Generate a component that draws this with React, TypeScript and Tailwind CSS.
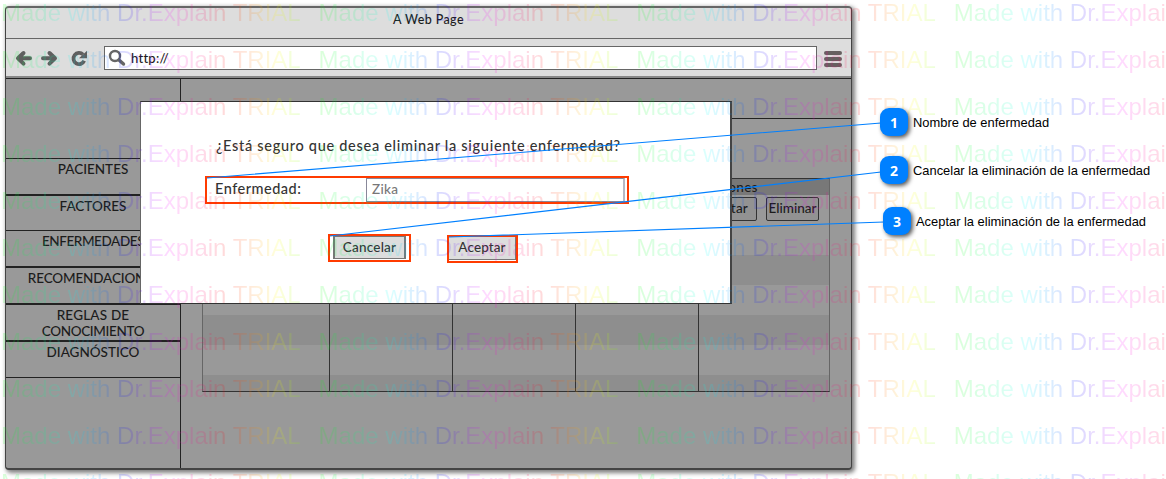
import React from "react";

function MenuItem({ children, className }: { children: React.ReactNode; className: string }) {
  return (
    <div className={`w-full shrink-0 whitespace-nowrap border-[#222] text-center text-[13.5px] leading-4 text-[#1c1c1c] ${className}`}>
      {children}
    </div>
  );
}

function Sidebar() {
  return (
    <nav className="flex w-[175px] shrink-0 flex-col border-r border-[#222]">
      <div className="h-[79px] shrink-0" />
      <MenuItem className="h-[36px] border-t pt-[2px]">PACIENTES</MenuItem>
      <MenuItem className="h-[36px] border-t-2 pt-[2px]">FACTORES</MenuItem>
      <MenuItem className="h-[36px] border-t pt-[2px] tracking-[-0.4px]">ENFERMEDADES</MenuItem>
      <MenuItem className="h-[37px] border-t-2 pt-[2px] pl-[2px] tracking-[-0.15px]">RECOMENDACIONES</MenuItem>
      <MenuItem className="h-[37px] border-t-2 pt-[2px]">
        <span className="tracking-[0.2px]">REGLAS DE</span>
        <br />
        <span className="tracking-[-0.35px]">CONOCIMIENTO</span>
      </MenuItem>
      <MenuItem className="h-[38px] border-y border-t-2 pt-[2px]">DIAGNÓSTICO</MenuItem>
    </nav>
  );
}

function ActionButton({ children, className }: { children: React.ReactNode; className: string }) {
  return (
    <div className={`flex h-6 items-center rounded-[2px] border border-[#333] bg-[#929292] pb-px text-[13.5px] text-[#1c1c1c] ${className}`}>
      {children}
    </div>
  );
}

function ResultsTable() {
  return (
    <div className="mt-[59px] ml-[21px] flex h-[214px] w-[628px] flex-col border border-[#333] border-x-[#666]">
      <div className="flex h-4 shrink-0 justify-end bg-[#787878]">
        <span className="w-[131px] pl-[4px] text-[13.5px] leading-[17px] tracking-[0.3px] text-[#1c1c1c]">Acciones</span>
      </div>
      <div className="grid grow grid-cols-[126px_123px_123px_123px_1fr] bg-[linear-gradient(#999_60px,#8e8e8e_60px_90px,#999_90px_120px,#8e8e8e_120px_150px,#999_150px_180px,#8e8e8e_180px)]">
        <div />
        <div className="border-l border-[#333]" />
        <div className="border-l border-[#333]" />
        <div className="border-l border-[#333]" />
        <div className="flex gap-[9px] border-l border-[#333] pt-[2px] pl-[4px]">
          <ActionButton className="w-[54px] justify-end pr-[8px] tracking-[0.2px]">Aceptar</ActionButton>
          <ActionButton className="w-[53px] justify-center">Eliminar</ActionButton>
        </div>
      </div>
    </div>
  );
}

function BrowserWindow() {
  return (
    <div className="flex h-[464px] w-[847px] flex-col overflow-hidden rounded-[4px] border border-t-2 border-b-2 border-[#444] border-t-[#666] bg-[#999] shadow-[2px_2px_4px_1px_rgba(0,0,0,0.5)]">
      <div className="h-[31px] shrink-0 border-b border-[#666] bg-[#ddd] pt-1 text-center text-[12.5px] leading-4 tracking-[0.4px] text-[#1c1c1c]">
        A Web Page
      </div>
      <div className="flex h-[37px] shrink-0 items-center bg-[#ddd]">
        <svg className="ml-[9px] h-[18px] w-[76px]" viewBox="0 0 76 18" fill="none" stroke="#5f5f5f" strokeWidth="4" strokeLinecap="round" strokeLinejoin="round">
          <path d="M8.500 4L3 9.300L8.500 14.600M4 9.300H15" />
          <path d="M34.500 4L40 9.300L34.500 14.600M28 9.300H39" />
          <path d="M68 5.500A5.600 5.600 0 1 0 69.200 11.800" strokeLinecap="butt" strokeWidth="3.800" />
          <path d="M72 1.800V9.300H64Z" fill="#5f5f5f" stroke="none" />
        </svg>
        <div className="ml-[13px] flex h-6 w-[713px] items-center border border-[#666] bg-white text-[13px] tracking-[0.25px] text-[#1c1c1c]">
          <svg className="ml-[3px] h-[18px] w-[18px]" viewBox="0 0 18 18" fill="none" stroke="#666">
            <circle cx="7" cy="7" r="5" strokeWidth="2.4" />
            <path d="M11 11L15.500 15" strokeWidth="3.400" strokeLinecap="round" />
          </svg>
          <span className="mt-[3px] ml-[5px]">http://</span>
        </div>
        <div className="mt-[2px] ml-[7px] flex w-[18px] flex-col gap-[2px]">
          <div className="h-1 rounded-full bg-[#666060]" />
          <div className="h-1 rounded-full bg-[#666060]" />
          <div className="h-1 rounded-full bg-[#666060]" />
        </div>
      </div>
      <div className="h-[3px] shrink-0 border-b border-[#222] bg-[#888]" />
      <div className="flex min-h-0 grow">
        <Sidebar />
        <main className="flex grow flex-col">
          <div className="h-10 shrink-0 border-b border-[#222]" />
          <ResultsTable />
        </main>
      </div>
    </div>
  );
}

function Dialog() {
  return (
    <div className="absolute top-[101px] left-[140px] flex h-[203px] w-[592px] flex-col border border-[#333] border-r-2 border-r-[#444] border-l-[#666] bg-white text-[#333]">
      <p className="mt-[34px] ml-[75px] text-[14.5px] leading-5 tracking-[0.71px] whitespace-nowrap">
        ¿Está seguro que desea eliminar la siguiente enfermedad?
      </p>
      <div className="mt-[20px] ml-[64px] flex h-[28px] w-[424px] items-center border-2 border-[#ff3b00] pl-[8px]">
        <span className="w-[151px] pb-[3px] text-[14.5px] tracking-[0.5px]">Enfermedad:</span>
        <div className="flex h-6 w-[259px] items-center border border-r-2 border-[#889] border-r-[#b8b8c4] pb-px pl-[5px] text-[13.5px] tracking-[0.3px] text-[#777]">
          Zika
        </div>
      </div>
      <div className="mt-[30px] ml-[187px] flex items-start gap-[36px]">
        <div className="h-[28px] w-[83px] border-2 border-[#ff3b00] px-[3px]">
          <div className="flex h-[23px] items-center justify-center border border-x-2 border-[#777] bg-[#ddd] text-[13.5px] tracking-[0.2px]">Cancelar</div>
        </div>
        <div className="mt-px h-[28px] w-[71px] border-2 border-[#ff3b00]">
          <div className="flex h-[23px] items-center justify-center border-r border-b border-[#777] bg-[#ddd] pb-px text-[13.5px] tracking-[0.1px]">Aceptar</div>
        </div>
      </div>
    </div>
  );
}

function Watermark() {
  return (
    <div className="pointer-events-none absolute inset-0 flex flex-col overflow-hidden opacity-[0.14]">
      {Array.from({ length: 11 }, (_, row) => (
        <div key={row} className="flex h-[47px] shrink-0">
          {[0, 1, 2, 3].map((col) => (
            <div key={col} className="w-[317.6px] shrink-0 pl-px">
              <span className="inline-block bg-[linear-gradient(90deg,#00ff00,#00ff80_13%,#00ffff_24%,#0080ff_33%,#0000ff_41%,#8000ff_48%,#ff00ff_56%,#ff0080_66%,#ff0000_75%,#ff8000_84%,#ffff00_92%,#80ff00)] bg-clip-text font-['Liberation_Sans'] text-[24px] leading-[26px] font-normal whitespace-nowrap text-transparent">
                Made with Dr.Explain TRIAL
              </span>
            </div>
          ))}
        </div>
      ))}
    </div>
  );
}

function Callout({ n, text, className }: { n: number; text: string; className: string }) {
  return (
    <div className={`absolute flex items-center gap-[5px] whitespace-nowrap ${className}`}>
      <div className="flex size-7 items-center justify-center rounded-[9px] bg-[#0080ff] font-['Open_Sans'] text-[14px] font-bold text-white shadow-[2px_2px_4px_rgba(0,0,0,0.65)]">
        {n}
      </div>
      <span className="pt-px font-['Liberation_Sans'] text-[12.9px] font-normal text-black">{text}</span>
    </div>
  );
}

export default function App() {
  return (
    <div className="relative h-[479px] w-[1166px] overflow-hidden bg-white pt-[6px] pl-[5px] font-['Lato',sans-serif] font-medium">
      <BrowserWindow />
      <Dialog />
      <Watermark />
      <svg className="absolute inset-0 h-[479px] w-[1166px]" fill="none" stroke="#0080ff" strokeWidth="1.1">
        <path d="M207 178L881 123M330 236L881 172M449 237L884 222" />
      </svg>
      <Callout n={1} text="Nombre de enfermedad" className="top-[108px] left-[880px]" />
      <Callout n={2} text="Cancelar la eliminación de la enfermedad" className="top-[156px] left-[880px]" />
      <Callout n={3} text="Aceptar la eliminación de la enfermedad" className="top-[207px] left-[883px]" />
    </div>
  );
}
